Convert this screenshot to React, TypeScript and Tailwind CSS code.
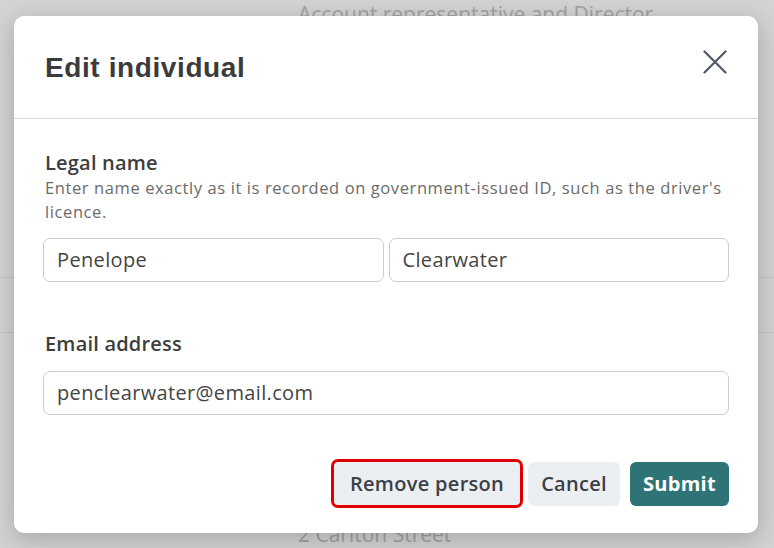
import React from "react";

const CloseIcon = () => (
  <svg width="24" height="24" viewBox="0 0 24 24" fill="none" stroke="#515766" strokeWidth="2.2" strokeLinecap="round">
    <path d="M1.5 1.5l21 21M22.5 1.5l-21 21" />
  </svg>
);

const TextField = ({ value }: { value: string }) => (
  <div className="flex h-[44px] flex-1 items-center rounded-[7px] border border-[#cdcdcd] bg-white px-[13px] text-[20px] tracking-[0.35px] text-[#444444]">
    {value}
  </div>
);

const App = () => {
  return (
    <div
      className="relative h-[548px] w-[774px] overflow-hidden bg-[#d3d3d3]"
      style={{ fontFamily: '"Open Sans", "Noto Sans", sans-serif' }}
    >
      {/* page behind the overlay */}
      <div className="flex h-full flex-col text-[21px] text-[#a2a2a2]">
        <div className="h-[279px] pl-[298px] leading-[28px]">Account representative and Director</div>
        <div className="h-[55px] border-t border-[#c3c3c3]" />
        <div className="h-[189px] border-t border-[#c3c3c3]" />
        <div className="pl-[298px] leading-[28px]">2 Carlton Street</div>
      </div>

      {/* dialog */}
      <div className="absolute left-[14px] top-[16px] flex h-[517px] w-[744px] flex-col rounded-[10px] bg-white shadow-[0_6px_24px_rgba(0,0,0,0.22)]">
        <div className="flex h-[103px] items-start justify-between border-b border-[#dadada] pl-[31px] pr-[30px]">
          <h1
            className="pt-[36px] text-[28px] font-bold leading-[32px] tracking-[0.6px] text-[#3b3b3b]"
            style={{ fontFamily: '"Liberation Sans", Arial, sans-serif' }}
          >
            Edit individual
          </h1>
          <button className="mt-[34px] mr-[1px]">
            <CloseIcon />
          </button>
        </div>

        <div className="flex flex-1 flex-col px-[29px] pt-[31px]">
          <div className="pl-[2px] text-[20px] font-semibold leading-[26px] tracking-[0.2px] text-[#3d3d3d]">Legal name</div>
          <p className="pl-[2px] text-[16.5px] leading-[24px] tracking-[0.6px] text-[#6b6b6b]">
            Enter name exactly as it is recorded on government-issued ID, such as the driver's licence.
          </p>
          <div className="mt-[14px] flex gap-[5px]">
            <TextField value="Penelope" />
            <TextField value="Clearwater" />
          </div>

          <div className="mt-[49px] pl-[2px] text-[20px] font-semibold leading-[26px] tracking-[0.2px] text-[#3d3d3d]">Email address</div>
          <div className="mt-[14px] flex">
            <TextField value="penclearwater@email.com" />
          </div>

          <div className="mt-[44px] flex items-center justify-end gap-[5px]">
            <button className="h-[49px] rounded-[7px] border-[3px] border-[#e00000] bg-[#eceff2] px-[16px] text-[20px] font-semibold tracking-[0.3px] text-[#3b4048]">
              Remove person
            </button>
            <button className="h-[44px] rounded-[6px] bg-[#eceff2] px-[13px] text-[20px] font-semibold tracking-[0.3px] text-[#3b4048]">
              Cancel
            </button>
            <button className="ml-[5px] h-[44px] rounded-[6px] bg-[#2e7375] px-[13px] text-[20px] font-bold tracking-[0.3px] text-white">
              Submit
            </button>
          </div>
        </div>
      </div>
    </div>
  );
};

export default App;
